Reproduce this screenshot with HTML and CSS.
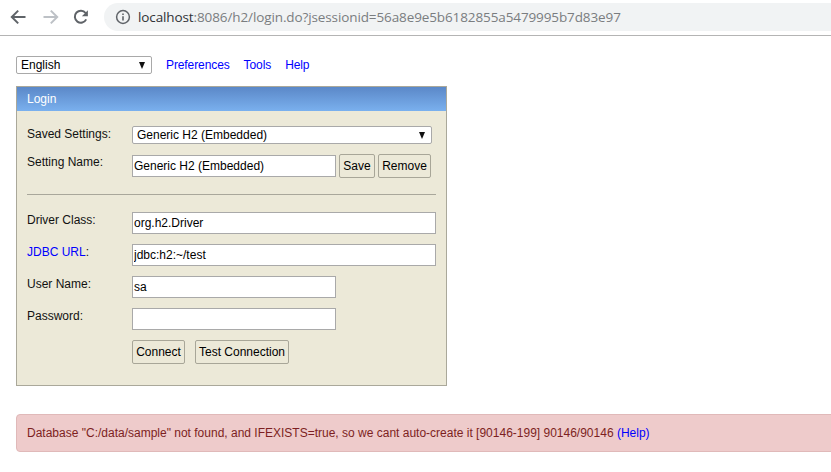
FILE: index.html
```html
<!DOCTYPE html>
<html lang="en">
<head>
<meta charset="utf-8">
<title>H2 Console</title>
<link rel="stylesheet" href="styles.css">
</head>
<body>
<header class="chrome">
  <svg class="nav-icon" width="16" height="16" viewBox="0 0 16 16"><path class="stroke-dark" d="M15.5 8H2M8.2 1.6 1.8 8l6.4 6.4"/></svg>
  <svg class="nav-icon" width="16" height="16" viewBox="0 0 16 16"><path class="stroke-light" d="M.5 8H14M7.8 1.6 14.2 8l-6.4 6.4"/></svg>
  <svg class="nav-icon" width="16" height="16" viewBox="0 0 16 16"><path class="stroke-dark" d="M13.2 10.4A6 6 0 1 1 12.6 4"/><path class="fill-dark" d="M14.9 1.2v6h-6z"/></svg>
  <div class="omnibox">
    <svg class="info" width="16" height="16" viewBox="0 0 16 16"><circle cx="8" cy="8" r="6.4" class="info-ring"/><path class="fill-dark" d="M7.2 7.2h1.6v4.4H7.2zM7.2 4.4h1.6V6H7.2z"/></svg>
    <span class="url"><span class="host">localhost</span>:8086/h2/login.do?jsessionid=56a8e9e5b6182855a5479995b7d83e97</span>
  </div>
</header>

<main class="page">
  <nav class="toolbar">
    <div class="select lang"><span>English</span><i class="caret"></i></div>
    <a href="#">Preferences</a>
    <a href="#">Tools</a>
    <a href="#">Help</a>
  </nav>

  <section class="login">
    <h1 class="login-title">Login</h1>
    <div class="login-body">
      <div class="row row-saved">
        <label class="label">Saved Settings:</label>
        <div class="select saved"><span>Generic H2 (Embedded)</span><i class="caret"></i></div>
      </div>
      <div class="row row-name">
        <label class="label">Setting Name:</label>
        <input class="input short" type="text" value="Generic H2 (Embedded)">
        <button class="btn btn-save" type="button">Save</button>
        <button class="btn btn-remove" type="button">Remove</button>
      </div>
      <hr class="rule">
      <div class="row">
        <label class="label">Driver Class:</label>
        <input class="input long" type="text" value="org.h2.Driver">
      </div>
      <div class="row">
        <label class="label"><a href="#">JDBC URL</a>:</label>
        <input class="input long" type="text" value="jdbc:h2:~/test">
      </div>
      <div class="row">
        <label class="label">User Name:</label>
        <input class="input short" type="text" value="sa">
      </div>
      <div class="row">
        <label class="label">Password:</label>
        <input class="input short" type="password">
      </div>
      <div class="row row-actions">
        <button class="btn btn-connect" type="button">Connect</button>
        <button class="btn btn-test" type="button">Test Connection</button>
      </div>
    </div>
  </section>

  <p class="error">Database "C:/data/sample" not found, and IFEXISTS=true, so we cant auto-create it [90146-199] 90146/90146 <a href="#">(Help)</a></p>
</main>
</body>
</html>
```
FILE: styles.css
```css
* { box-sizing: border-box; }
html, body { margin: 0; padding: 0; height: 100%; overflow: hidden; background: #fff; }
body { font: 12px/14px "Liberation Sans", Arial, sans-serif; color: #000; }
a { color: #0000ff; text-decoration: none; }

.chrome { height: 36px; display: flex; align-items: center; padding: 0 0 1px 10px; border-bottom: 1px solid #b4b4b4; background: #fff; }
.nav-icon { flex: none; margin-right: 17px; }
.nav-icon:nth-child(2) { margin-right: 14px; }
.nav-icon:nth-child(3) { margin-right: 15px; }
.stroke-dark { fill: none; stroke: #5f6368; stroke-width: 2; }
.stroke-light { fill: none; stroke: #bdc1c6; stroke-width: 2; }
.fill-dark { fill: #5f6368; }
.info-ring { fill: none; stroke: #5f6368; stroke-width: 1.5; }
.omnibox { flex: 1; height: 28px; margin-top: -1px; display: flex; align-items: center; padding-left: 11px; background: #f1f3f4; border-radius: 14px 0 0 14px; }
.info { flex: none; margin-right: 7px; }
.url { font: 13.5px/18px "Open Sans", sans-serif; color: #7a7d80; white-space: nowrap; letter-spacing: -.11px; }
.host { color: #303236; }

.page { padding: 19px 0 0 16px; }
.toolbar { display: flex; align-items: center; height: 20px; }
.toolbar a { margin-left: 14px; letter-spacing: -.1px; }
.select { display: flex; align-items: center; justify-content: space-between; height: 18px; background: #fff; border: 1px solid #a9a9a9; border-radius: 2px; padding: 0 6px 0 4px; }
.lang { width: 136px; }
.saved { width: 300px; }
.caret { width: 0; height: 0; border-left: 3.5px solid transparent; border-right: 3.5px solid transparent; border-top: 7px solid #111; }

.login { width: 431px; height: 300px; margin-top: 11px; border: 1px solid #aaa89a; background: #ece9d8; }
.login-title { margin: 0; height: 24px; padding: 0 10px; font: 12px/25px "Liberation Sans", Arial, sans-serif; color: #fff; background: linear-gradient(#5b88c8, #7ab0ee); }
.login-body { padding: 0 10px; }
.row { display: flex; align-items: flex-start; height: 22px; margin-bottom: 10px; }
.row-saved { height: 18px; margin-top: 15px; margin-bottom: 11px; }
.row-name { margin-bottom: 0; }
.label { flex: none; width: 105px; padding-top: 1px; color: #111; line-height: 14px; }
.row-name .label { padding-top: 0; }
.input { display: block; height: 22px; padding: 1px; font: 12px "Liberation Sans", Arial, sans-serif; color: #000; background: #fff; border: 1px solid #a9a9a9; border-radius: 0; }
.input.short { width: 204px; }
.input.long { width: 304px; }
.btn { height: 24px; padding: 0; font: 12px "Liberation Sans", Arial, sans-serif; color: #000; background: #ece9d8; border: 1px solid #a8a698; border-radius: 2px; }
.row-name .btn { margin-top: -1px; }
.btn-save { width: 36px; margin-left: 3px; }
.btn-remove { width: 53px; margin-left: 3px; }
.rule { height: 1px; margin: 17px 0; border: 0; background: #a9a79b; }
.row-actions { height: 24px; margin: 0 0 0 105px; }
.btn-connect { width: 53px; }
.btn-test { width: 94px; margin-left: 10px; }

.error { height: 38px; margin: 28px -6px 0 0; padding: 0 10px; line-height: 36px; color: #7d1f22; background: #eecbcb; border: 1px solid #e0b9b9; border-radius: 4px; white-space: nowrap; }
```
